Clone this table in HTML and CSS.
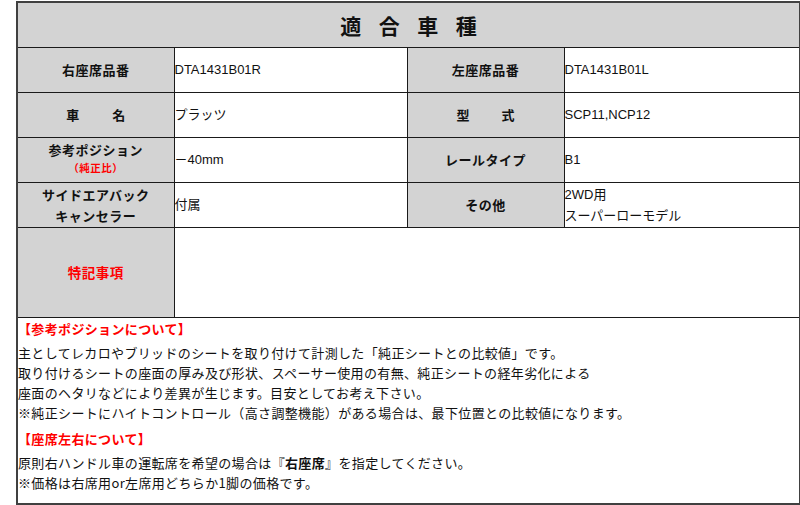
FILE: index.html
```html
<!DOCTYPE html>
<html lang="ja">
<head>
<meta charset="utf-8">
<title>適合車種</title>
<link rel="stylesheet" href="styles.css">
</head>
<body>
<div class="sheet">
<table class="fit">
<colgroup>
<col class="c-lbl"><col class="c-val"><col class="c-lbl"><col class="c-val2">
</colgroup>
<tr class="r-title"><th colspan="4" class="title"><span class="title-text">適合車種</span></th></tr>
<tr class="r"><th class="lbl">右座席品番</th><td class="val">DTA1431B01R</td><th class="lbl">左座席品番</th><td class="val">DTA1431B01L</td></tr>
<tr class="r"><th class="lbl"><span class="spread">車名</span></th><td class="val">プラッツ</td><th class="lbl"><span class="spread spread-b">型式</span></th><td class="val">SCP11,NCP12</td></tr>
<tr class="r"><th class="lbl"><div class="pos">参考ポジション</div><div class="sub">（純正比）</div></th><td class="val">－40mm</td><th class="lbl">レールタイプ</th><td class="val">B1</td></tr>
<tr class="r"><th class="lbl"><div class="two">サイドエアバック</div><div class="two">キャンセラー</div></th><td class="val">付属</td><th class="lbl">その他</th><td class="val"><div class="two">2WD用</div><div class="two">スーパーローモデル</div></td></tr>
<tr class="r-tall"><th class="lbl red">特記事項</th><td class="val" colspan="3"></td></tr>
<tr class="r-notes"><td colspan="4" class="notes">
<div class="head">【参考ポジションについて】</div>
<div class="line">主としてレカロやブリッドのシートを取り付けて計測した「純正シートとの比較値」です。</div>
<div class="line">取り付けるシートの座面の厚み及び形状、スペーサー使用の有無、純正シートの経年劣化による</div>
<div class="line">座面のヘタリなどにより差異が生じます。目安としてお考え下さい。</div>
<div class="line">※純正シートにハイトコントロール（高さ調整機能）がある場合は、最下位置との比較値になります。</div>
<div class="head">【座席左右について】</div>
<div class="line">原則右ハンドル車の運転席を希望の場合は『<b>右座席</b>』を指定してください。</div>
<div class="line">※価格は右席用or左席用どちらか1脚の価格です。</div>
</td></tr>
</table>
</div>
</body>
</html>
```

FILE: styles.css
```css
html, body {
  margin: 0;
  padding: 0;
  background: #ffffff;
}
.sheet {
  padding: 1px 0 0 16px;
}
.fit {
  border-collapse: collapse;
  table-layout: fixed;
  width: 783px;
  border: 2px solid #404040;
  font-family: "Liberation Sans", "Noto Sans CJK JP", sans-serif;
  color: #111111;
}
.c-lbl { width: 157px; }
.c-val { width: 233px; }
.c-val2 { width: 236px; }
.fit th, .fit td {
  border: 1px solid #1a1a1a;
  padding: 0;
}
.r-title { height: 45px; }
.r { height: 45px; }
.r-tall { height: 90px; }
.r-notes { height: 187px; }
.title {
  background: #d3d3d3;
  font-family: "Noto Sans CJK JP", sans-serif;
  font-size: 21px;
  font-weight: bold;
  text-align: center;
  line-height: 24px;
}
.title-text {
  letter-spacing: 17.5px;
  margin-left: 17.5px;
}
.lbl {
  background: #d3d3d3;
  font-family: "Noto Sans CJK JP", sans-serif;
  font-size: 13px;
  font-weight: bold;
  letter-spacing: 0.5px;
  text-align: center;
  vertical-align: middle;
  line-height: 20px;
}
.spread {
  letter-spacing: 33px;
  margin-left: 33px;
}
.spread-b {
  letter-spacing: 32px;
  margin-left: 32px;
}
.pos { line-height: 19px; margin-top: -3px; }
.sub {
  color: #ff0000;
  font-size: 10.5px;
  line-height: 18px;
}
.two { line-height: 21px; }
.th-fix { margin-top: -2px; }
.red { color: #ff0000; font-size: 13.5px; }
.val {
  font-size: 13px;
  text-align: left;
  vertical-align: middle;
  padding-left: 2px;
  line-height: 20px;
  background: #ffffff;
}
.notes {
  vertical-align: top;
  text-align: left;
  padding: 0 3px;
  font-family: "Noto Sans CJK JP", sans-serif;
  font-size: 13px;
  letter-spacing: 0.35px;
}
.head {
  color: #ff0000;
  font-weight: bold;
  line-height: 21px;
  margin: 5px 0 4px;
}
.head:first-child { margin-top: 0; }
.line { line-height: 20px; }
.notes b { font-weight: bold; }
```
